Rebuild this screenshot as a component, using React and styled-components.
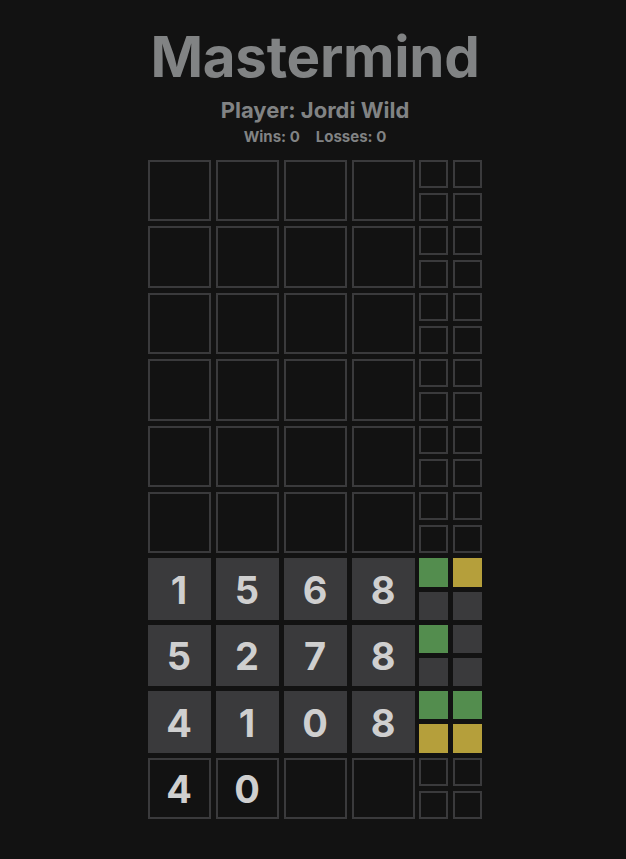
import React from "react";
import styled, { createGlobalStyle } from "styled-components";

const GlobalStyle = createGlobalStyle`
  html, body {
    margin: 0;
    padding: 0;
    background: #121212;
  }
  body {
    font-family: Inter, "Noto Sans", "Liberation Sans", sans-serif;
  }
`;

const rows = [
  { digits: [], hints: [] },
  { digits: [], hints: [] },
  { digits: [], hints: [] },
  { digits: [], hints: [] },
  { digits: [], hints: [] },
  { digits: [], hints: [] },
  { digits: ["1", "5", "6", "8"], hints: ["green", "yellow", "gray", "gray"], done: true },
  { digits: ["5", "2", "7", "8"], hints: ["green", "gray", "gray", "gray"], done: true },
  { digits: ["4", "1", "0", "8"], hints: ["green", "green", "yellow", "yellow"], done: true },
  { digits: ["4", "0"], hints: [] },
];

const hintColors = {
  green: "#538d4e",
  yellow: "#b59f3b",
  gray: "#3a3a3c",
};

const App = () => {
  return (
    <Page>
      <GlobalStyle />
      <Title>Mastermind</Title>
      <Player>Player: Jordi Wild</Player>
      <Stats>
        <span>Wins: 0</span>
        <span>Losses: 0</span>
      </Stats>
      <Board>
        {rows.map((row, i) => (
          <Row key={i}>
            {[0, 1, 2, 3].map((c) => (
              <Cell key={c} $done={row.done}>
                {row.digits[c] || ""}
              </Cell>
            ))}
            <Hints>
              {[0, 1, 2, 3].map((h) => (
                <Hint key={h} $color={hintColors[row.hints[h]]} />
              ))}
            </Hints>
          </Row>
        ))}
      </Board>
    </Page>
  );
};

export default App;

const Page = styled.div`
  display: flex;
  flex-direction: column;
  align-items: center;
  padding: 27px 0 0 4px;
  min-height: 859px;
  box-sizing: border-box;
`;

const Title = styled.h1`
  margin: 0;
  font-size: 56.5px;
  font-weight: 700;
  color: #818384;
  line-height: 60px;
  letter-spacing: -0.3px;
`;

const Player = styled.h2`
  margin: 10px 0 0;
  font-size: 22px;
  font-weight: 700;
  color: #818384;
  line-height: 26px;
`;

const Stats = styled.div`
  display: flex;
  gap: 16px;
  margin-top: 5px;
  font-size: 15px;
  font-weight: 700;
  color: #818384;
  line-height: 18px;
`;

const Board = styled.div`
  display: flex;
  flex-direction: column;
  gap: 5px;
  margin-top: 14px;
`;

const Row = styled.div`
  display: grid;
  grid-template-columns: repeat(4, 63px) 63px;
  column-gap: 5px;
  height: 61.4px;
`;

const Cell = styled.div`
  box-sizing: border-box;
  display: flex;
  align-items: center;
  justify-content: center;
  border: 2px solid #3a3a3c;
  background: ${(p) => (p.$done ? "#3a3a3c" : "transparent")};
  color: #cfcfcf;
  font-size: 38px;
  font-weight: 700;
  padding-top: 2px;
`;

const Hints = styled.div`
  display: grid;
  grid-template-columns: 29px 29px;
  grid-template-rows: 1fr 1fr;
  gap: 5px;
  margin-left: -1px;
`;

const Hint = styled.div`
  box-sizing: border-box;
  border: ${(p) => (p.$color ? "none" : "2px solid #3a3a3c")};
  background: ${(p) => p.$color || "transparent"};
`;
